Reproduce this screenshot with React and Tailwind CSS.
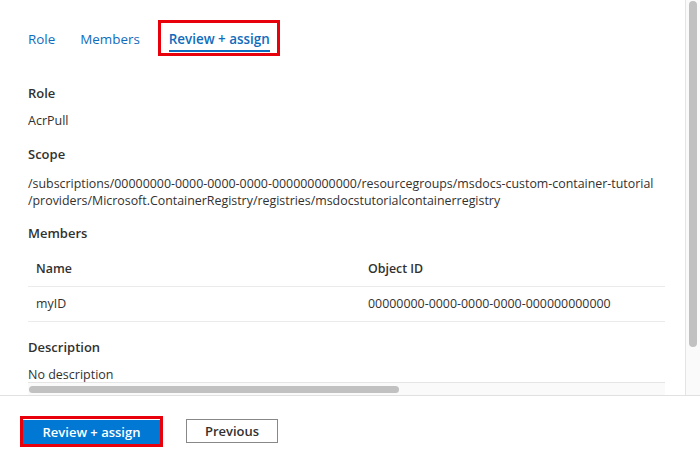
import React from "react";

const members = [{ name: "myID", objectId: "00000000-0000-0000-0000-000000000000" }];

const Heading = ({ children, className = "" }) => (
  <div className={`text-[13px] leading-5 font-semibold text-[#323130] ${className}`}>{children}</div>
);

export default function App() {
  return (
    <div className="w-[700px] h-[472px] bg-white flex flex-col font-['Open_Sans',sans-serif] text-[#323130] overflow-hidden">
      {/* scrollable body */}
      <div className="h-[396px] flex border-b border-[#e1e1e1]">
        <div className="flex-1 flex flex-col min-w-0 pl-[28px] pr-[20px]">
          <div className="flex-1 overflow-hidden">
            {/* tabs */}
            <div className="flex items-start mt-[20px] text-[13.4px] leading-5 text-[#0f6cbd]">
              <div className="pt-[9px]">Role</div>
              <div className="pt-[9px] ml-[25px]">Members</div>
              <div className="ml-[18px] border-[3px] border-[#e8000b] pl-[8px] pr-[7px] pt-[6px] pb-[1px]">
                <div className="font-semibold">Review + assign</div>
                <div className="mt-[1px] h-[2px] bg-[#0f6cbd]"></div>
              </div>
            </div>

            <Heading className="mt-[27px]">Role</Heading>
            <div className="mt-[8px] text-[12.5px] leading-5">AcrPull</div>

            <Heading className="mt-[13px]">Scope</Heading>
            <div className="mt-[11px] text-[12.4px] leading-[17px] whitespace-nowrap">
              <div>/subscriptions/00000000-0000-0000-0000-000000000000/resourcegroups/msdocs-custom-container-tutorial</div>
              <div>/providers/Microsoft.ContainerRegistry/registries/msdocstutorialcontainerregistry</div>
            </div>

            <Heading className="mt-[14px]">Members</Heading>
            <div className="mt-[9px] text-[12.4px]">
              <div className="flex h-[35px] items-center border-b border-[#edebe9] font-semibold">
                <div className="w-[332px] pl-[8px]">Name</div>
                <div className="pl-[8px]">Object ID</div>
              </div>
              {members.map((m) => (
                <div key={m.name} className="flex h-[35px] items-center border-b border-[#edebe9]">
                  <div className="w-[332px] pl-[8px]">{m.name}</div>
                  <div className="pl-[8px]">{m.objectId}</div>
                </div>
              ))}
            </div>

            <Heading className="mt-[15px]">Description</Heading>
            <div className="mt-[8px] text-[12.5px] leading-5">No description</div>
          </div>

          {/* horizontal scrollbar */}
          <div className="h-[13px] border-t border-[#e5e5e5] bg-[#fafafa] flex items-center pl-[1px]">
            <div className="w-[370px] h-[7px] rounded-full bg-[#c1c1c1]"></div>
          </div>
        </div>

        {/* vertical scrollbar */}
        <div className="w-[15px] border-l border-[#e5e5e5] bg-[#fafafa] pt-[1px] pl-[3px]">
          <div className="w-[8px] h-[346px] rounded-full bg-[#c1c1c1]"></div>
        </div>
      </div>

      {/* footer */}
      <div className="flex items-start pt-[20px] pl-[20px]">
        <div className="border-[3px] border-[#e8000b]">
          <button className="w-[137px] h-[24px] bg-[#0078d4] text-white text-[13px] font-semibold leading-5">
            Review + assign
          </button>
        </div>
        <button className="ml-[23px] mt-[3px] w-[92px] h-[24px] border border-[#8a8886] bg-white text-[13px] font-semibold leading-5 text-[#323130]">
          Previous
        </button>
      </div>
    </div>
  );
}
